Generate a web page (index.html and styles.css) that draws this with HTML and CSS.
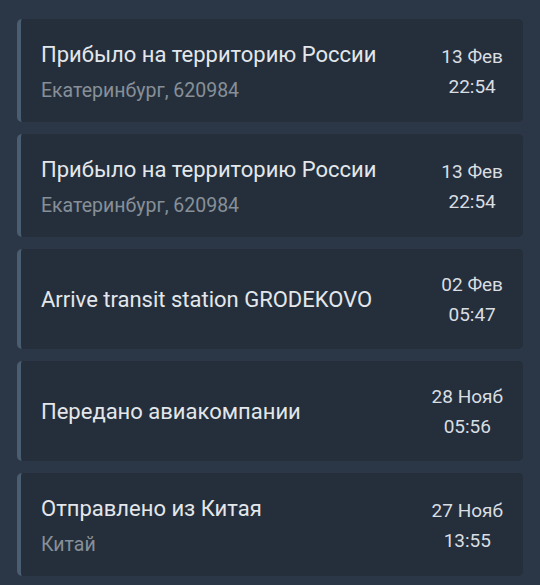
FILE: index.html
```html
<!DOCTYPE html>
<html lang="ru">

<head>
    <meta charset="UTF-8">
    <meta name="viewport" content="width=device-width, initial-scale=1.0">
    <title>Отслеживание посылки</title>
    <link rel="stylesheet" href="styles.css">
</head>

<body>
    <div class="track-list">
        <div class="track-item">
            <div class="track-info">
                <div class="track-title">Прибыло на территорию России</div>
                <div class="track-place">Екатеринбург, 620984</div>
            </div>
            <div class="track-date">
                <div>13 Фев</div>
                <div>22:54</div>
            </div>
        </div>

        <div class="track-item">
            <div class="track-info">
                <div class="track-title">Прибыло на территорию России</div>
                <div class="track-place">Екатеринбург, 620984</div>
            </div>
            <div class="track-date">
                <div>13 Фев</div>
                <div>22:54</div>
            </div>
        </div>

        <div class="track-item">
            <div class="track-info">
                <div class="track-title">Arrive transit station GRODEKOVO</div>
            </div>
            <div class="track-date">
                <div>02 Фев</div>
                <div>05:47</div>
            </div>
        </div>

        <div class="track-item">
            <div class="track-info">
                <div class="track-title">Передано авиакомпании</div>
            </div>
            <div class="track-date">
                <div>28 Нояб</div>
                <div>05:56</div>
            </div>
        </div>

        <div class="track-item">
            <div class="track-info">
                <div class="track-title">Отправлено из Китая</div>
                <div class="track-place">Китай</div>
            </div>
            <div class="track-date">
                <div>27 Нояб</div>
                <div>13:55</div>
            </div>
        </div>
    </div>
</body>

</html>
```

FILE: styles.css
```css
body {
    margin: 0;
    background: #2b3646;
    font-family: Roboto, "Noto Sans", Arial, sans-serif;
}

.track-list {
    display: flex;
    flex-direction: column;
    gap: 12px;
    padding: 19px 17px 8px 17px;
}

.track-item {
    display: flex;
    align-items: center;
    justify-content: space-between;
    background: #252f3b;
    border-left: 4px solid #4a5d71;
    border-radius: 5px;
    padding: 21px 20px 19px 20px;
}

.track-info {
    display: flex;
    flex-direction: column;
}

.track-title {
    color: #e3e7eb;
    font-size: 22px;
    line-height: 30px;
}

.track-place {
    color: #878f99;
    font-size: 19.5px;
    line-height: 25px;
    margin-top: 8px;
}

.track-date {
    color: #d9dee3;
    font-size: 19px;
    line-height: 30px;
    text-align: center;
}
```
